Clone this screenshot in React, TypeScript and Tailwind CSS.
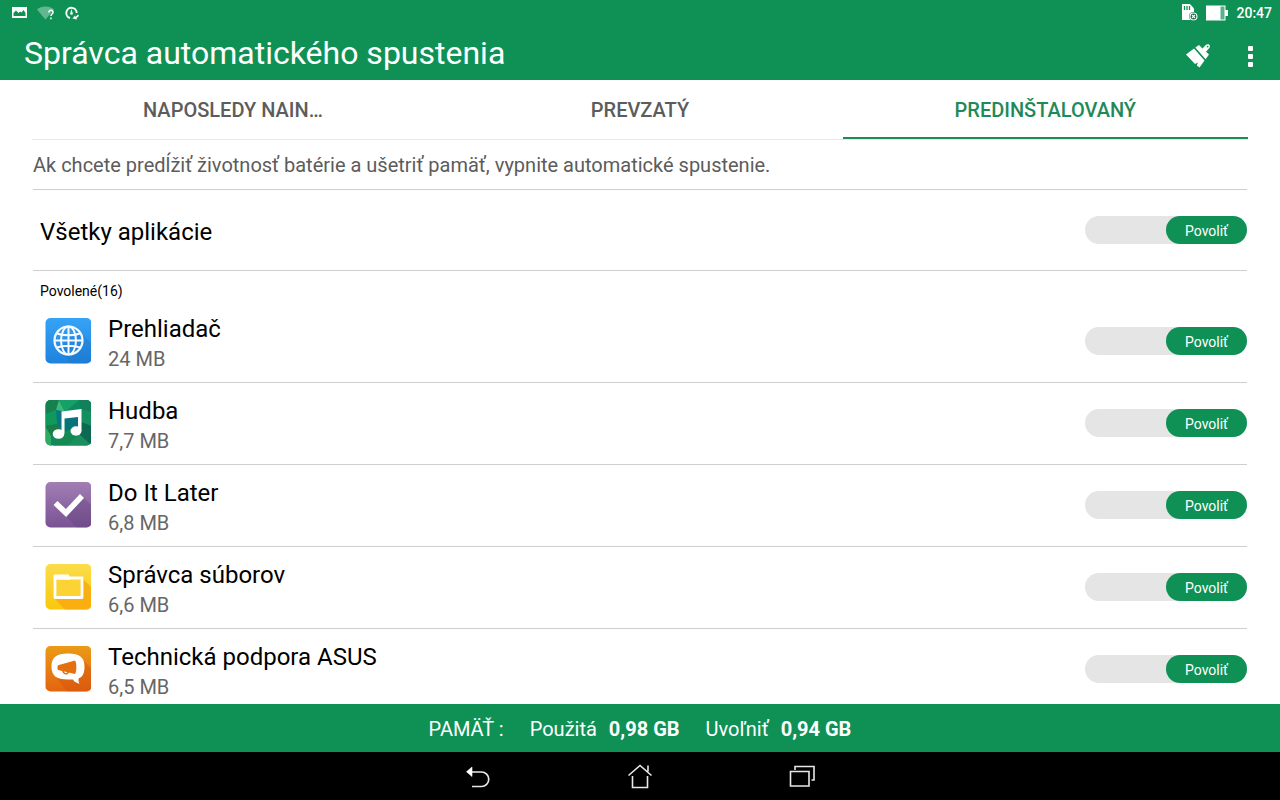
import { useState, type ReactNode } from "react";

function GlobeIcon() {
    return (
        <svg viewBox="0 0 46 46" className="size-[46px]" aria-hidden="true">
            <defs>
                <linearGradient id="globeBg" x1="0" y1="0" x2="0" y2="1">
                    <stop offset="0" stopColor="#36a3f6" />
                    <stop offset="1" stopColor="#1f82dd" />
                </linearGradient>
            </defs>
            <rect x="0.500" width="46" height="45.500" rx="5" fill="url(#globeBg)" />
            <path d="M33 12 46 25V41a5 5 0 0 1-5 4.500H26L13 32Z" fill="#1a70c4" opacity=".3" />
            <g fill="none" stroke="#f4faff" strokeWidth="2">
                <circle cx="23.500" cy="22.500" r="14" strokeWidth="2.200" />
                <ellipse cx="23.500" cy="22.500" rx="7.500" ry="14" />
                <path d="M23.500 8.500v28M9.500 22.500h28M12 15.500c6 2.400 17 2.400 23 0M12 29.500c6-2.400 17-2.400 23 0" />
            </g>
        </svg>
    );
}

function MusicIcon() {
    return (
        <svg viewBox="0 0 46 46" className="size-[46px]" aria-hidden="true">
            <defs>
                <clipPath id="musicClip">
                    <rect x="0.500" width="46" height="45.500" rx="5" />
                </clipPath>
            </defs>
            <g clipPath="url(#musicClip)">
                <rect width="47" height="46" fill="#0e8a5f" />
                <path d="M0 0h14l-3 10-11 4Z" fill="#16814e" />
                <path d="m14 0 6 12-9-2Z" fill="#3cb878" />
                <path d="M0 14l11-4 3 14-14 2Z" fill="#0f9a5c" />
                <path d="m11 10 9 2-2 20-6-8Z" fill="#0b7784" />
                <path d="M14 0h20L20 12Z" fill="#14a066" />
                <path d="M34 0h13v12l-11-3Z" fill="#12805a" />
                <path d="m36 9 11 3v14l-11-4Z" fill="#149060" />
                <path d="M20 12 34 12v14l-14 8Z" fill="#08737c" />
                <path d="m0 26 12-2 6 8L6 36Z" fill="#1a7e48" />
                <path d="M0 26 6 36v10H0Z" fill="#32ab62" />
                <path d="m18 32 8-3 6 8-10 9H8Z" fill="#128a52" />
                <path d="m36 22 11 4v20L34 34Z" fill="#0d6a52" />
                <path d="m34 34 13 12H22Z" fill="#1b8f5c" />
            </g>
            <path d="M16.500 11.500 36.500 9v22H33V17L19.500 18.500v15h-3Z" fill="#fff" />
            <ellipse cx="13.500" cy="34" rx="5.800" ry="4.800" fill="#fff" />
            <ellipse cx="31" cy="31" rx="5.500" ry="4.700" fill="#fff" />
        </svg>
    );
}

function CheckIcon() {
    return (
        <svg viewBox="0 0 46 46" className="size-[46px]" aria-hidden="true">
            <defs>
                <linearGradient id="checkBg" x1="0" y1="0" x2="0" y2="1">
                    <stop offset="0" stopColor="#a07fb4" />
                    <stop offset="1" stopColor="#7a5294" />
                </linearGradient>
            </defs>
            <rect x="0.500" width="46" height="45.500" rx="5" fill="url(#checkBg)" />
            <path d="m38 15 8 8v18a5 5 0 0 1-5 4.500h-9L20 33Z" fill="#5e3b78" opacity=".3" />
            <path d="m10.500 21 10.500 10L37 14" fill="none" stroke="#fff" strokeWidth="5.600" />
        </svg>
    );
}

function FolderIcon() {
    return (
        <svg viewBox="0 0 46 46" className="size-[46px]" aria-hidden="true">
            <defs>
                <linearGradient id="folderBg" x1="0" y1="0" x2="0" y2="1">
                    <stop offset="0" stopColor="#fbdc4a" />
                    <stop offset="1" stopColor="#f9c80e" />
                </linearGradient>
            </defs>
            <rect x="0.500" width="46" height="45.500" rx="5" fill="url(#folderBg)" />
            <path d="m37 14 9 9v18a5 5 0 0 1-5 4.500H20L10 35Z" fill="#f9a70e" opacity=".8" />
            <path d="M10 14h27v19.500H10Z" fill="#fbd335" stroke="#fff" strokeWidth="2.800" strokeLinejoin="round" />
            <path d="M9.500 10.500h14l1.500 2.500v2.500H8.600v-4Z" fill="#fff" />
        </svg>
    );
}

function MegaphoneIcon() {
    return (
        <svg viewBox="0 0 46 46" className="size-[46px]" aria-hidden="true">
            <defs>
                <linearGradient id="megaBg" x1="0" y1="0" x2="0" y2="1">
                    <stop offset="0" stopColor="#eb9a17" />
                    <stop offset="1" stopColor="#e46410" />
                </linearGradient>
            </defs>
            <rect x="0.500" width="46" height="45.500" rx="5" fill="url(#megaBg)" />
            <path d="m37 13 9 9v19a5 5 0 0 1-5 4.500H22L11 31Z" fill="#d2500c" opacity=".4" />
            <path
                d="M23 7.500c12 0 16.500 4 16.500 13 0 7-2 10.500-6 12 0 2 0 3.500 1 5.200-3.500-.7-5.500-2.200-6.500-4.200H23C11 33.500 6.500 29.500 6.500 20.500S11 7.500 23 7.500Z"
                fill="#fff"
            />
            <path d="M13 19.200 30 14.500c1.800 2.500 1.800 11 0 13.500L13 24c-.8-1-.8-3.500 0-4.800Z" fill="#e4700f" />
            <path d="M18 25c.5 3.300 4.500 3.600 5.500 1" fill="none" stroke="#e4700f" strokeWidth="1.600" />
        </svg>
    );
}

const apps: { name: string; size: string; icon: ReactNode }[] = [
    { name: "Prehliadač", size: "24 MB", icon: <GlobeIcon /> },
    { name: "Hudba", size: "7,7 MB", icon: <MusicIcon /> },
    { name: "Do It Later", size: "6,8 MB", icon: <CheckIcon /> },
    { name: "Správca súborov", size: "6,6 MB", icon: <FolderIcon /> },
    { name: "Technická podpora ASUS", size: "6,5 MB", icon: <MegaphoneIcon /> },
];

const tabs = ["NAPOSLEDY NAINŠTALOVANÝ", "PREVZATÝ", "PREDINŠTALOVANÝ"];

function Toggle({ label }: { label: string }) {
    return (
        <label className="flex h-7 w-[162px] shrink-0 cursor-pointer rounded-full bg-[#e5e5e5] has-checked:justify-end">
            <input type="checkbox" defaultChecked aria-label={label} className="peer sr-only" />
            <span className="flex w-1/2 items-center justify-center rounded-full bg-gray-400 pt-0.5 text-sm text-white peer-checked:bg-[#0f9156]">
                Povoliť
            </span>
        </label>
    );
}

function StatusBar() {
    return (
        <div className="flex h-6 items-center justify-between pt-px pr-2 pl-3">
            <div className="flex items-center gap-2.5">
                <svg viewBox="0 0 15 12" className="h-3 w-[15px]" aria-hidden="true">
                    <path d="M0 0h15v11H0Z" fill="#fff" />
                    <path d="M1.500 9V6l2.500-2.500L6.500 6 8 4.500 9.500 5.500 11.500 3l2 3v3Z" fill="#0f9156" />
                </svg>
                <svg viewBox="0 0 18 14" className="h-3.5 w-[18px]" aria-hidden="true">
                    <path d="M0 3.500C4-.5 13-.5 17 3.500L8.500 13.500Z" fill="#fff" opacity=".35" />
                    <path d="M11.800 6.500c0-3 4.200-2.700 4.200-.2 0 1.700-2.100 1.700-2.100 3.700M13.900 11.500v1.800" fill="none" stroke="#fff" strokeWidth="1.500" />
                </svg>
                <svg viewBox="0 0 14 14" className="size-3.5" aria-hidden="true">
                    <path d="M5 12A5.200 5.200 0 1 1 11.700 7" fill="none" stroke="#fff" strokeWidth="1.900" />
                    <path d="m6.500 3 1.300 4.500a1.300 1.300 0 1 1-2.600 0Z" fill="#fff" />
                    <path d="m7.500 12.500 2.500-3 .5 1.500 2.500-2.500 1 1.500-2.500 2 .5 1.500Z" fill="#fff" />
                </svg>
            </div>
            <div className="flex items-center gap-2">
                <svg viewBox="0 0 18 17" className="h-[17px] w-[18px]" aria-hidden="true">
                    <path d="M2 0h8l4 4.500V16H2Z" fill="#fff" />
                    <path d="M4.500 2v4M7 2v4M9.500 2v4" stroke="#0f9156" strokeWidth="1.300" />
                    <circle cx="13.500" cy="12.500" r="4.500" fill="#0b6b40" />
                    <circle cx="13.500" cy="12.500" r="3.500" fill="none" stroke="#fff" strokeWidth="1.200" />
                    <path d="m12 11 3 3m0-3-3 3" stroke="#fff" strokeWidth="1.200" />
                </svg>
                <svg viewBox="0 0 22 16" className="h-4 w-[22px]" aria-hidden="true">
                    <path d="M0 .500h19.500v4.500H22v6h-2.500v4.500H0Z" fill="#fff" />
                    <path d="M14.500 1.500h4v13h-4Z" fill="#0f9156" opacity=".7" />
                </svg>
                <span className="text-sm font-medium">20:47</span>
            </div>
        </div>
    );
}

export default function App() {
    const [active, setActive] = useState(2);

    return (
        <div className="flex h-screen flex-col overflow-hidden bg-white font-[Roboto,sans-serif] text-black">
            <header className="shrink-0 bg-[#0f9156] text-white">
                <StatusBar />
                <div className="flex h-14 items-center justify-between pt-0.5 pr-[22px] pl-6">
                    <h1 className="text-[32px] leading-10">Správca automatického spustenia</h1>
                    <div className="flex items-center gap-[30px] pt-1.5">
                        <button type="button" aria-label="Vyčistiť">
                            <svg viewBox="0 0 26 26" className="size-[26px]" fill="#fff">
                                <path d="M0 11.500 8 5.500 18.500 17.500 13.500 24.500 10.800 22.500 12 19.500 9 21Z" />
                                <path d="M9.300 4.500 13 2l3.500 3.500L20 1.800c2.800-1.800 5 .6 3.300 3.200L20 8.800 23 11.500 19.600 16.300Z" />
                                <circle cx="21.600" cy="3.600" r=".9" fill="#0f9156" />
                            </svg>
                        </button>
                        <button type="button" aria-label="Ďalšie možnosti" className="flex w-4 flex-col items-center gap-[3px]">
                            <span className="size-[5px] rounded-[1px] bg-white" />
                            <span className="size-[5px] rounded-[1px] bg-white" />
                            <span className="size-[5px] rounded-[1px] bg-white" />
                        </button>
                    </div>
                </div>
            </header>

            <main className="flex min-h-0 flex-1 flex-col px-8">
                <div role="tablist" className="grid h-15 shrink-0 grid-cols-3 border-b border-[#e8e8e8]">
                    {tabs.map((tab, i) => (
                        <button
                            key={tab}
                            type="button"
                            role="tab"
                            aria-selected={active === i}
                            onClick={() => setActive(i)}
                            className={
                                active === i
                                    ? "truncate border-b-2 border-[#1f8a58] px-[111px] pt-0.5 text-xl font-medium text-[#1f8a58]"
                                    : "truncate border-b-2 border-transparent px-[111px] pt-0.5 text-xl font-medium text-[#5c5c5c]"
                            }
                        >
                            {tab}
                        </button>
                    ))}
                </div>

                <div className="min-h-0 flex-1 overflow-y-auto px-px [scrollbar-width:none]">
                    <p className="border-b border-[#cfcfcf] pt-[11px] pb-2.5 text-xl text-[#5c5c5c]">
                        Ak chcete predĺžiť životnosť batérie a ušetriť pamäť, vypnite automatické spustenie.
                    </p>

                    <div className="flex h-[81px] items-center justify-between border-b border-[#cfcfcf] pl-[7px]">
                        <span className="pt-1 text-2xl">Všetky aplikácie</span>
                        <Toggle label="Všetky aplikácie" />
                    </div>

                    <h2 className="pt-2.5 pl-[7px] text-sm">Povolené(16)</h2>
                    <ul>
                        {apps.map((app) => (
                            <li key={app.name} className="flex h-[82px] items-center border-b border-[#cfcfcf] pb-0.5 pl-3">
                                {app.icon}
                                <div className="flex-1 pt-1.5 pl-[17px]">
                                    <div className="text-2xl leading-[30px]">{app.name}</div>
                                    <div className="text-xl leading-[30px] text-[#666]">{app.size}</div>
                                </div>
                                <Toggle label={app.name} />
                            </li>
                        ))}
                    </ul>
                </div>
            </main>

            <div className="flex h-12 shrink-0 items-center justify-center bg-[#0f9156] pt-0.5 text-xl text-white">
                <span className="pr-[26px]">PAMÄŤ :</span>
                <span className="pr-3">Použitá</span>
                <strong className="pr-[26px] font-bold">0,98 GB</strong>
                <span className="pr-3">Uvoľniť</span>
                <strong className="font-bold">0,94 GB</strong>
            </div>

            <nav className="flex h-12 shrink-0 items-center justify-center gap-[134px] bg-black">
                <button type="button" aria-label="Späť">
                    <svg viewBox="0 0 28 28" className="size-7" fill="none" stroke="#e8e8e8" strokeWidth="1.700">
                        <path d="M6 10h11.500a7 7 0 0 1 0 14.500H8" />
                        <path d="M8 5v9.500L2.500 9.800Z" fill="#fff" stroke="#fff" strokeWidth=".6" />
                    </svg>
                </button>
                <button type="button" aria-label="Domov">
                    <svg viewBox="0 0 28 28" className="size-7" fill="none" stroke="#e8e8e8" strokeWidth="1.600">
                        <path d="M2.500 13.500 14 3.500l11.500 10M22 3.500v6M6.500 14v11.500h15V14" />
                    </svg>
                </button>
                <button type="button" aria-label="Posledné aplikácie">
                    <svg viewBox="0 0 28 28" className="size-7" fill="none" stroke="#e8e8e8" strokeWidth="1.600">
                        <path d="M2.500 9.500h18.500v14.500H2.500Z" />
                        <path d="M7 8V4.500h19V18h-2.500" />
                    </svg>
                </button>
            </nav>
        </div>
    );
}
